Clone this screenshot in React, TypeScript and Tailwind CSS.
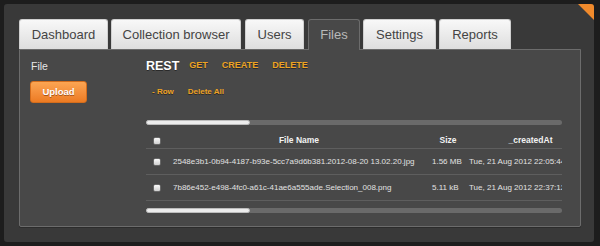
import React from 'react';

type Tab = { label: string; className: string; active?: boolean };

const tabs: Tab[] = [
  { label: 'Dashboard', className: 'w-[89px]' },
  { label: 'Collection browser', className: 'w-[130px] ml-[3px]' },
  { label: 'Users', className: 'w-[59px] ml-[4px]' },
  { label: 'Files', className: 'w-[52px] ml-[4px]', active: true },
  { label: 'Settings', className: 'w-[73px] ml-[3px]' },
  { label: 'Reports', className: 'w-[72px] ml-[3px]' },
];

const files = [
  { name: '2548e3b1-0b94-4187-b93e-5cc7a9d6b381.2012-08-20 13.02.20.jpg', size: '1.56 MB', created: 'Tue, 21 Aug 2012 22:05:44 GMT' },
  { name: '7b86e452-e498-4fc0-a61c-41ae6a555ade.Selection_008.png', size: '5.11 kB', created: 'Tue, 21 Aug 2012 22:37:12 GMT' },
];

const Check = () => (
  <span className="block w-[6px] h-[6px] rounded-[1px] bg-gradient-to-b from-[#fafafa] to-[#cfcfcf] shadow-[0_0_0_0.5px_#888]" />
);

const Sep = ({ h = 'h-[10px]' }: { h?: string }) => <span className={`w-px ${h} bg-[#666]`} />;

const Scrollbar = ({ className = '' }: { className?: string }) => (
  <div className={`w-[416px] h-[5px] rounded-full bg-[#6a6a6a] ${className}`}>
    <div className="w-[104px] h-[5px] rounded-full bg-[#ececec] border border-[#bdbdbd]" />
  </div>
);

export default function App() {
  return (
    <div className="w-[600px] h-[246px] bg-[#1d1d1d] p-[4px] font-['Liberation_Sans',Arial,sans-serif]">
      <div className="relative w-[590px] h-[238px] bg-[#393939] rounded-[3px] pt-[15px] pl-[15px]">
        <div className="absolute top-0 right-0 w-[16px] h-[16px] bg-[#f08a2c] rounded-tr-[3px] [clip-path:polygon(0_0,100%_0,100%_100%)]" />

        <div className="flex h-[30px] items-stretch">
          {tabs.map((t) =>
            t.active ? (
              <div
                key={t.label}
                className={`${t.className} relative z-10 h-[31px] rounded-t-[3px] border border-b-0 border-[#6c6c6c] bg-[#484848] flex items-center justify-center text-[13px] text-[#b9b9b9]`}
              >
                {t.label}
              </div>
            ) : (
              <div
                key={t.label}
                className={`${t.className} h-[30px] rounded-t-[3px] border border-b-0 border-[#d0d0d0] bg-gradient-to-b from-[#f8f8f8] to-[#dedede] flex items-center justify-center text-[13px] text-[#444]`}
              >
                {t.label}
              </div>
            )
          )}
        </div>

        <div className="w-[562px] h-[178px] border border-[#6c6c6c] bg-[#484848] rounded-b-[2px] shadow-[0_1px_0_#2c2c2c] flex">
          <div className="w-[126px] pl-[10px] pt-[9px]">
            <div className="h-[16px] flex items-center pl-[1px] text-[10.5px] text-[#e6e6e6]">File</div>
            <div className="mt-[6px] w-[57px] h-[22px] rounded-[3px] bg-gradient-to-b from-[#fca552] to-[#ec7b22] border border-[#d46d1c] flex items-center justify-center text-[9.5px] font-bold text-white [text-shadow:0_1px_0_#a8541a]">
              Upload
            </div>
          </div>

          <div className="w-[416px] pt-[8px] overflow-hidden">
            <div className="h-[16px] flex items-center text-[9px] font-bold text-[#eea323] [text-shadow:0_1px_0_#2a2a2a]">
              <span className="text-[12.5px] text-white mr-[10px]">REST</span>
              <span>GET</span>
              <span className="mx-[7px]"><Sep /></span>
              <span>CREATE</span>
              <span className="mx-[7px]"><Sep /></span>
              <span>DELETE</span>
            </div>

            <div className="mt-[11px] h-[14px] pl-[6px] flex items-center text-[8px] font-bold text-[#eea323] [text-shadow:0_1px_0_#2a2a2a]">
              <span>- Row</span>
              <span className="mx-[7px]"><Sep /></span>
              <span>Delete All</span>
            </div>

            <Scrollbar className="mt-[21px]" />

            <div className="w-[416px] overflow-hidden">
              <div className="w-[450px]">
                <div className="mt-[8px] h-[16px] flex items-center border-b border-[#5e5e5e] text-[8.5px] font-bold text-[#f2f2f2]">
                  <div className="w-[22px] flex justify-center"><Check /></div>
                  <div className="w-[262px] text-center">File Name</div>
                  <div className="w-[36px] text-center">Size</div>
                  <div className="w-[129px] text-center">_createdAt</div>
                </div>
                {files.map((f) => (
                  <div key={f.name} className="h-[26px] flex items-center border-b border-[#5e5e5e] text-[8px] text-[#e2e2e2] whitespace-nowrap">
                    <div className="w-[22px] flex justify-center"><Check /></div>
                    <div className="w-[262px] pl-[5px]">{f.name}</div>
                    <div className="w-[36px] pl-[2px]">{f.size}</div>
                    <div className="w-[129px] pl-[3px]">{f.created}</div>
                  </div>
                ))}
              </div>
            </div>

            <Scrollbar className="mt-[7px]" />
          </div>
        </div>
      </div>
    </div>
  );
}
